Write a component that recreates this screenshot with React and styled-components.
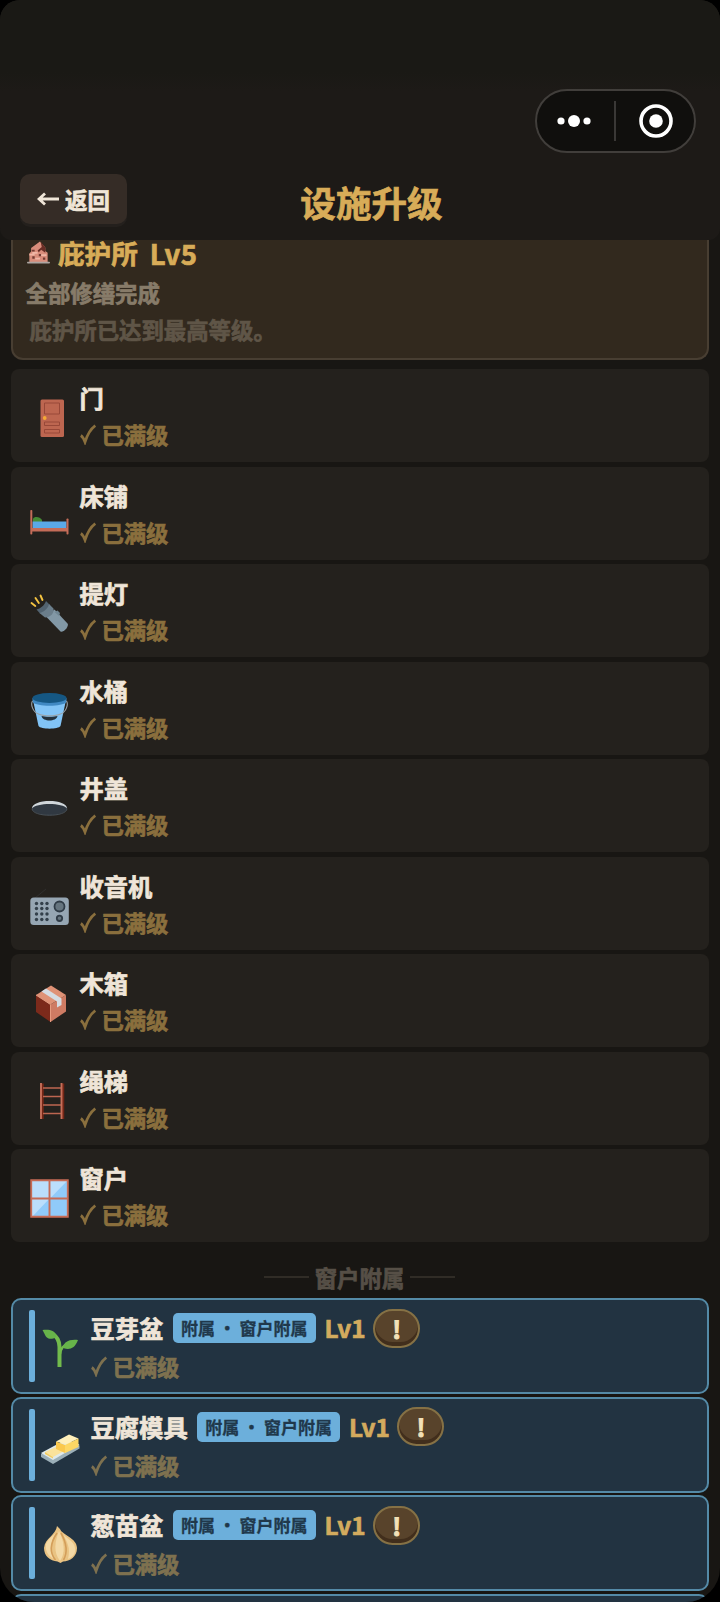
import React from 'react';
import styled, { createGlobalStyle } from 'styled-components';

const GlobalStyle = createGlobalStyle`
  * {
    box-sizing: border-box;
  }

  body {
    margin: 0;
    background: #000;
    font-family: "Noto Sans CJK SC", "Noto Sans", sans-serif;
    font-weight: 700;
    -webkit-text-stroke: .7px currentColor;
  }
`;

const Screen = styled.div`
  display: flex;
  flex-direction: column;
  height: 1602px;
  overflow: hidden;
  background: #181613;
  border-radius: 20px 20px 34px 34px;
`;

const Header = styled.header`
  flex: none;
  height: 240px;
  padding: 89px 24px 0 20px;
  background: linear-gradient(#1a1915, #1a1915 30%, #1d1a17 38%);
  border-radius: 0 0 12px 12px;
`;

const Capsule = styled.div`
  display: flex;
  align-items: center;
  justify-content: space-between;
  width: 161px;
  height: 64px;
  margin-left: auto;
  padding: 0 21px 0 19px;
  border: 2px solid #413e3b;
  border-radius: 32px;
  background: #100f0d;
`;

const CapsuleDivider = styled.span`
  width: 2px;
  height: 40px;
  margin-right: 2px;
  background: #3a3836;
`;

const TitleBar = styled.div`
  display: grid;
  grid-template-columns: 107px 1fr 80px;
  align-items: start;
  padding-top: 21px;
`;

const BackButton = styled.button`
  display: flex;
  align-items: center;
  justify-content: center;
  gap: 6px;
  height: 50px;
  padding: 0 0 1px;
  border: 0;
  border-radius: 10px;
  background: #352c26;
  box-shadow: 0 3px 0 #24201d;
  color: #f0e6d8;
  font: inherit;
  font-size: 22.4px;
`;

const Title = styled.h1`
  margin: 4px 0 0;
  color: #d8ac58;
  font-size: 35.6px;
  line-height: 48px;
  text-align: center;
`;

const Content = styled.main`
  flex: 1;
  padding: 0 11px;
`;

const ShelterCard = styled.section`
  display: flow-root;
  height: 119.5px;
  padding: 0 12.5px;
  border: 2px solid #483e32;
  border-top: 0;
  border-radius: 0 0 12px 12px;
  background: #32291e;
`;

const ShelterTitle = styled.h2`
  display: flex;
  align-items: center;
  gap: 8.5px;
  height: 30px;
  margin: -2.5px 0 0 1px;
  color: #d8ac58;
  font-size: 26.6px;
  line-height: 30px;
  white-space: pre;
`;

const ShelterLevel = styled.span`
  margin-left: 3.5px;
  font-size: 27.5px;
  letter-spacing: .4px;
`;

const ShelterText = styled.p`
  margin: ${props => (props.$faded ? '5px 0 0 4px' : '8px 0 0')};
  color: ${props => (props.$faded ? '#5f5547' : '#877b69')};
  font-size: 22.4px;
  line-height: 32px;
`;

const List = styled.ul`
  display: flex;
  flex-direction: column;
  gap: ${props => props.$gap};
  margin: ${props => props.$top || 0} 0 0;
  padding: 0;
  list-style: none;
`;

const Row = styled.li`
  display: flex;
  flex: none;
  height: 93px;
  padding: 11px 19px 0;
  border-radius: 8px;
  background: #24211d;
`;

const AttachedRow = styled(Row)`
  height: 96px;
  padding: 10px 16px 0;
  border: 2px solid #548aa7;
  border-radius: 10px;
  background: #223341;
`;

const Accent = styled.span`
  width: 5.5px;
  height: 72px;
  margin-right: 6.5px;
  border-radius: 2px;
  background: #6cafdb;
`;

const IconSlot = styled.span`
  flex: none;
  width: 39px;
  height: 39px;
  margin-top: 19px;
  margin-right: 10.5px;

  svg {
    display: block;
  }
`;

const NameLine = styled.div`
  display: flex;
  align-items: center;
  height: 36px;
  color: #efe5d8;
  font-size: 24.3px;
  line-height: 36px;
`;

const Status = styled.div`
  display: flex;
  align-items: center;
  gap: 6px;
  height: 36px;
  margin-top: ${props => (props.$attached ? '2px' : '0')};
  color: ${props => (props.$attached ? '#7e714f' : '#8a6f3d')};
  font-size: 22.3px;
  line-height: 36px;
`;

const Tag = styled.span`
  height: 30px;
  margin-left: 9.5px;
  padding: 0 8px;
  border-radius: 5px;
  background: #6cafdb;
  color: #20384b;
  font-size: 17px;
  line-height: 29px;
  white-space: pre;
  -webkit-text-stroke-width: .3px;
`;

const Level = styled.span`
  margin: 0 7.5px 0 9px;
  color: #d3ab5e;
`;

const InfoButton = styled.button`
  width: 47px;
  height: 39px;
  padding: 0;
  border: 2px solid #857145;
  border-radius: 20px;
  background: #58432b;
  box-shadow: inset 0 -4px 0 #412e1c;
  color: #f3e1b8;
  font: inherit;
  font-size: 24px;
  line-height: 33px;
  -webkit-text-stroke-width: 1px;
`;

const SectionLabel = styled.div`
  display: flex;
  align-items: center;
  justify-content: center;
  gap: 6px;
  height: 56px;
  padding: 13px 1px 0 0;
  color: #564f46;
  font-size: 22.4px;
  line-height: 32px;

  &::before,
  &::after {
    content: "";
    width: 45px;
    height: 2px;
    background: #302c26;
  }
`;

const Icon = ({ children, size = 39 }) => (
  <svg width={size} height={size} viewBox="0 0 39 39">{children}</svg>
);

const DoorIcon = () => (
  <Icon>
    <rect x="10.5" y=".5" width="23.5" height="37.5" rx="1.5" fill="#bd6650" />
    <path d="M14.500 4h15v11h-15zM14.500 23h15v3.500h-15zM14.500 30.500h15v3.500h-15z" fill="#bd6650" stroke="#984838" />
    <circle cx="14.7" cy="19" r="1.9" fill="#f5a936" />
  </Icon>
);

const BedIcon = () => (
  <Icon>
    <path d="M3 22c1-3 7-2.500 9 1v2.500H3z" fill="#468b35" />
    <path d="M2.500 24.500h34v7h-34z" fill="#5aa9e8" />
    <rect x="1" y="31" width="37" height="3.500" fill="#c46c58" />
    <rect x=".3" y="13" width="2" height="24.500" rx=".8" fill="#c46c58" />
    <rect x="36.500" y="21.500" width="2" height="16" rx=".8" fill="#c46c58" />
  </Icon>
);

const FlashlightIcon = () => (
  <Icon>
    <path d="M1.500 9l3.800 3M5.500 4l3.300 5M10.500 1.500l2 4.500" stroke="#f5c441" strokeWidth="1.900" strokeLinecap="round" />
    <path d="M16 22.500L24.500 15.500 37.500 29.500c2 2.500-4 9.500-7 8z" fill="#8298a6" />
    <path d="M6.500 15.500c4-1 8-4 9.500-8.500l3.500 3.500c-1 4.500-5 8-9.500 9z" fill="#526370" />
    <path d="M9.500 19c4.500-1 8.500-4.500 9.500-9l4.500 4.500c1 4.500-3 9-8.500 9z" fill="#6b7e8b" />
    <path d="M24.500 18l3-1.500 2.500 2.500-1 3z" fill="#708693" />
  </Icon>
);

const BucketIcon = () => (
  <Icon>
    <path d="M3 8h33l-5.500 26c-2 3.500-20 3.500-22 0z" fill="#82c4f6" />
    <path d="M2.500 6v4c4 5 30 5 34 0V6z" fill="#4089c3" />
    <ellipse cx="19.500" cy="6" rx="17" ry="5" fill="#155783" />
    <path d="M11.500 24c4 1 12 1 16 0-1 6-15 6-16 0z" fill="#24323d" />
    <path d="M2.500 9c-2 3 0 11 6 13 5 2.500 17 2.500 22 0 6-2 8-10 6-13" fill="none" stroke="#99a2a8" strokeWidth="1.100" />
  </Icon>
);

const ManholeIcon = () => (
  <Icon>
    <ellipse cx="19.500" cy="19" rx="17.500" ry="7.200" fill="#303841" />
    <path d="M2 19.500c0-10 35-10 35 0-4-6-31-6-35 0z" fill="#d0d6da" />
    <path d="M2 19.500c0 9 35 9 35 0" fill="none" stroke="#505c66" strokeWidth=".8" />
  </Icon>
);

const RadioIcon = () => (
  <Icon>
    <path d="M5 11L16 2" stroke="#302f2e" />
    <rect x=".3" y="10.5" width="38.500" height="27.500" rx="3.500" fill="#96a6b3" />
    {[16.500, 21.500, 27, 32.500].map(y => (
      [6.500, 11.800, 17].map(x => <circle key={`${x}-${y}`} cx={x} cy={y} r="1.700" fill="#33404b" />)
    ))}
    <circle cx="29.500" cy="19.500" r="5" fill="#66757f" stroke="#303c47" strokeWidth="1.800" />
    <circle cx="29.500" cy="31.300" r="2.700" fill="#66757f" stroke="#303c47" strokeWidth="1.800" />
  </Icon>
);

const BoxIcon = () => (
  <Icon>
    <path d="M6 11l14.500 9.500V38L6 28z" fill="#7c2a1b" />
    <path d="M20.500 20.500L36 11v16.500L20.500 38z" fill="#ce7b63" />
    <path d="M6 11l15-9.500L36 11l-15.500 9.500z" fill="#df9276" />
    <path d="M11.500 7.500l4.500-3 15.500 10V21l-4.500 2.500v-6z" fill="#d5dce2" />
    <path d="M6 11l14.500 9.500V38" fill="none" stroke="#e59b80" />
  </Icon>
);

const LadderIcon = () => (
  <Icon>
    <path d="M12.500 1.500v35.500M33 1.500v35.500" stroke="#742616" strokeWidth="2.500" />
    <path d="M13 6h18M13 14.500h18M13 23h18M13 31.500h18" stroke="#bd6650" strokeWidth="1.700" />
    <path d="M11 1v36M31.500 1v36" stroke="#c66f59" strokeWidth="1.900" />
  </Icon>
);

const WindowIcon = () => (
  <Icon>
    <rect x="1" y="1" width="37" height="37" fill="#bbdefb" />
    <path d="M38 1v18.500H20zM19.500 19.500V38H2zM20 19.500h18V38H20z" fill="#90caf9" />
    <path d="M1.200 1.200h36.600v36.600H1.200zM19.500 1v37M1 19.500h37" fill="none" stroke="#c66b55" strokeWidth="1.900" />
  </Icon>
);

const SproutIcon = () => (
  <Icon>
    <path d="M18.500 38V18c0-6-2-10-6.500-12.500" fill="none" stroke="#72bb4c" strokeWidth="4" />
    <path d="M19 25c1-6 3-8 8-10" fill="none" stroke="#72bb4c" strokeWidth="2.500" />
    <path d="M1.500 1c6-1 12 0 14 5 0 3-4 4.500-8 3.500C4 8 3.500 4 1.500 1z" fill="#67b44a" />
    <path d="M37 11c-3 8-8 10-13.500 8.500-2-1-1-4 1-6C28 11 32 10.500 37 11z" fill="#67b44a" />
  </Icon>
);

const ButterIcon = () => (
  <Icon>
    <path d="M0 26l25-13.500 13.500 5v3L12 36 0 29z" fill="#9bafb8" />
    <path d="M0 25l25-13.500 13.500 5L12 32z" fill="#dfe9eb" />
    <path d="M4 24l13-6 8 4-13 7z" fill="#fae29b" />
    <path d="M4 24l8 5v1.500L4 26z" fill="#f6ce5d" />
    <path d="M15 13.500l13-7 9.500 4L25 16.500z" fill="#fff0bb" />
    <path d="M15 13.500l9 3.500v8L15 21z" fill="#fac84d" />
    <path d="M24 17L37.500 10.500v8.500L24 25z" fill="#fdd764" />
  </Icon>
);

const OnionIcon = () => (
  <Icon>
    <path d="M16 0l3 3c2 6 17 9 17 19 0 9-7 13-14 13.500L19.500 37l-3-1.500C9 35 3 30 3 22 4 12 15 9 16 0z" fill="#e9c383" />
    <path d="M15 7C8 14 4 15 5 23c1 5 4 8 8 10-4-6-4-19 2-26zM22 8c4 8 8 14 5 25 5-2 8-6 7-11C33 15 26 13 22 8z" fill="#f3d9a6" />
    <path d="M18 5c-4 10-6 21 1 30 6-8 4-20-1-30z" fill="#f3d9a6" />
    <path d="M16 7c-6 9-9 18-1.500 27M20 7c5 9 7 19 2.500 27" fill="none" stroke="#d39e5a" strokeWidth="1.600" />
  </Icon>
);

const ShelterIcon = () => (
  <Icon size={23}>
    <path d="M4 36V21l3-3v-6L22 1l9 10v6l4 3v16z" fill="#d98d7b" />
    <path d="M23 1l8 10v9l-7-5-4 4-2-3 7-6z" fill="#682d25" />
    <path d="M8 15h5v3H8zM20 22h4v4h-4zM9 26h4v4H9zM27 28h4v4h-4z" fill="#713b32" />
    <path d="M4 23h9M14 30h8M24 24h9M9 20h9" stroke="#efb6a5" strokeWidth="3" />
    <rect y="35" width="39" height="3" rx="1.500" fill="#aba4a0" />
  </Icon>
);

const CheckMark = () => (
  <svg width="16" height="22" viewBox="0 0 16 22">
    <path d="M.8 12.500c2 1.200 3 3.200 4.200 6.500C7 12.500 10.500 6 15.300 2.500" fill="none" stroke="currentColor" strokeWidth="2.700" />
  </svg>
);

const facilities = [
  { name: '门', icon: DoorIcon },
  { name: '床铺', icon: BedIcon },
  { name: '提灯', icon: FlashlightIcon },
  { name: '水桶', icon: BucketIcon },
  { name: '井盖', icon: ManholeIcon },
  { name: '收音机', icon: RadioIcon },
  { name: '木箱', icon: BoxIcon },
  { name: '绳梯', icon: LadderIcon },
  { name: '窗户', icon: WindowIcon },
];

const attachments = [
  { name: '豆芽盆', icon: SproutIcon },
  { name: '豆腐模具', icon: ButterIcon },
  { name: '葱苗盆', icon: OnionIcon },
];

const Facility = ({ name, icon: Glyph }) => (
  <Row>
    <IconSlot><Glyph /></IconSlot>
    <div>
      <NameLine>{name}</NameLine>
      <Status>
        <CheckMark />
        已满级
      </Status>
    </div>
  </Row>
);

const Attachment = ({ name, icon: Glyph }) => (
  <AttachedRow>
    <Accent />
    <IconSlot><Glyph /></IconSlot>
    <div>
      <NameLine>
        {name}
        <Tag>附属 · 窗户附属</Tag>
        <Level>Lv1</Level>
        <InfoButton>!</InfoButton>
      </NameLine>
      <Status $attached>
        <CheckMark />
        已满级
      </Status>
    </div>
  </AttachedRow>
);

const App = () => (
  <>
    <GlobalStyle />
    <Screen>
      <Header>
        <Capsule>
          <svg width="36" height="36" viewBox="0 0 36 36" fill="#fff">
            <circle cx="5" cy="18" r="3.600" />
            <circle cx="18" cy="18" r="6" />
            <circle cx="31" cy="18" r="3.600" />
          </svg>
          <CapsuleDivider />
          <svg width="34" height="34" viewBox="0 0 34 34">
            <circle cx="17" cy="17" r="15" fill="none" stroke="#fff" strokeWidth="3.600" />
            <circle cx="17" cy="17" r="6.800" fill="#fff" />
          </svg>
        </Capsule>
        <TitleBar>
          <BackButton>
            <svg width="22" height="16" viewBox="0 0 22 16" fill="none" stroke="currentColor" strokeWidth="2.800">
              <path d="M22 8H2M8 2.500L2 8l6 5.500" />
            </svg>
            返回
          </BackButton>
          <Title>设施升级</Title>
        </TitleBar>
      </Header>
      <Content>
        <ShelterCard>
          <ShelterTitle>
            <ShelterIcon />
            庇护所
            <ShelterLevel>Lv5</ShelterLevel>
          </ShelterTitle>
          <ShelterText>全部修缮完成</ShelterText>
          <ShelterText $faded>庇护所已达到最高等级。</ShelterText>
        </ShelterCard>
        <List $gap="4.5px" $top="9.5px">
          {facilities.map(item => <Facility key={item.name} {...item} />)}
        </List>
        <SectionLabel>窗户附属</SectionLabel>
        <List $gap="2.6px">
          {attachments.map(item => <Attachment key={item.name} {...item} />)}
          <AttachedRow />
        </List>
      </Content>
    </Screen>
  </>
);

export default App;
